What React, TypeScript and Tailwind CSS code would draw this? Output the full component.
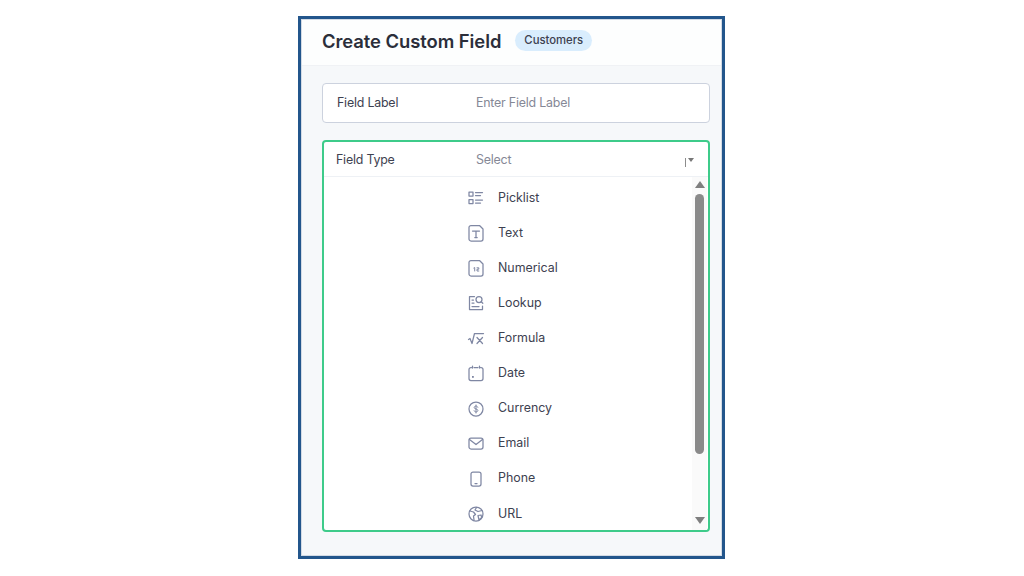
import type { ReactNode } from 'react'

const iconClass = 'h-[18px] w-[18px] text-[#7f87a3]'

function Svg({ children }: { children: ReactNode }) {
  return (
    <svg viewBox="0 0 18 18" fill="none" stroke="currentColor" strokeWidth="1.25" strokeLinecap="round" strokeLinejoin="round" className={iconClass}>
      {children}
    </svg>
  )
}

const fieldTypes: { name: string; icon: ReactNode }[] = [
  {
    name: 'Picklist',
    icon: (
      <Svg>
        <rect x="2" y="3" width="4" height="4" />
        <rect x="2" y="10.500" width="4" height="4" />
        <path d="M8.500 3.500h7M8.500 6.500h5M8.500 11h7M8.500 14h5" />
      </Svg>
    ),
  },
  {
    name: 'Text',
    icon: (
      <Svg>
        <path d="M4 1.500h8.500l3.500 3.500v10a2 2 0 0 1-2 2H4a2 2 0 0 1-2-2V3.500a2 2 0 0 1 2-2z" />
        <path d="M5.500 7h7M9 7v6.500M7.800 13.500h2.400" />
      </Svg>
    ),
  },
  {
    name: 'Numerical',
    icon: (
      <Svg>
        <path d="M4 1.500h8.500l3.500 3.500v10a2 2 0 0 1-2 2H4a2 2 0 0 1-2-2V3.500a2 2 0 0 1 2-2z" />
        <path d="M6.800 9l.9-.5v3.500M10 8.800h1.800v1.400H10v1.800h1.800" strokeWidth="1" />
      </Svg>
    ),
  },
  {
    name: 'Lookup',
    icon: (
      <Svg>
        <path d="M7.500 2.500H2.500v13h13V12" />
        <path d="M5 6h1.500M5 9h2M5 12.500h7" />
        <circle cx="12" cy="5.500" r="3" />
        <path d="M14.200 7.700l1.600 1.600" />
      </Svg>
    ),
  },
  {
    name: 'Formula',
    icon: (
      <Svg>
        <path d="M1.500 10.500l1.500-1 2 5L7.500 4.500h9" />
        <path d="M10 8.500l5.500 6M15.500 8.500l-5.500 6" />
      </Svg>
    ),
  },
  {
    name: 'Date',
    icon: (
      <Svg>
        <path d="M4.500 3.500H4a2 2 0 0 0-2 2v9a2 2 0 0 0 2 2h10a2 2 0 0 0 2-2v-9a2 2 0 0 0-2-2h-.5M7 3.500h4" />
        <path d="M5.500 2v2M12.500 2v2" />
        <rect x="5" y="12" width="1.800" height="1.800" fill="currentColor" stroke="none" />
      </Svg>
    ),
  },
  {
    name: 'Currency',
    icon: (
      <Svg>
        <circle cx="9" cy="9" r="7" />
        <path d="M10.800 7.200c-.3-.8-1-1.100-1.800-1.100-1 0-1.800.5-1.800 1.400 0 2 3.700 1 3.700 3 0 .9-.9 1.400-1.900 1.400-.9 0-1.600-.4-1.900-1.100M9 5v8" strokeWidth="1" />
      </Svg>
    ),
  },
  {
    name: 'Email',
    icon: (
      <Svg>
        <rect x="2" y="3" width="14" height="11" rx="2" />
        <path d="M2.500 4.500l6.500 5 6.500-5" />
      </Svg>
    ),
  },
  {
    name: 'Phone',
    icon: (
      <Svg>
        <rect x="4" y="2" width="10" height="14" rx="2" />
        <path d="M8 13.500h2" />
      </Svg>
    ),
  },
  {
    name: 'URL',
    icon: (
      <Svg>
        <circle cx="9" cy="9" r="7" />
        <path d="M3 6l3.500 1 2 2.500-2 1.500.5 4M9.500 2.500L8 5l3 1.500 4-1M11 10.500l3-.5.800 2.500-2.800 2.500z" />
      </Svg>
    ),
  },
]

export default function App() {
  return (
    <div className="h-[576px] w-[1024px] overflow-hidden bg-white pl-[298px] pt-4 font-['Inter',sans-serif] text-[#3d4150]">
      <div className="h-[543px] w-[427px] border-[3px] border-[#23568c]">
        <div className="flex h-full flex-col border border-[#d3dbe5] bg-[#f6f8fa]">
          <div className="flex h-[46px] items-center gap-[14px] border-b border-[#f0f2f5] bg-[#fdfefe] pl-[20px]">
            <h1 className="mb-[2px] text-[18.400px] font-semibold tracking-[-0.05px] text-[#2b2e3a]">Create Custom Field</h1>
            <span className="mb-[4px] rounded-full bg-[#d9edfd] px-[9px] py-[1px] text-[11.300px] font-medium leading-[19px] text-[#3d4150]">
              Customers
            </span>
          </div>

          <div className="flex flex-1 flex-col gap-[17px] pl-[20px] pr-[11px] pt-[17px]">
            <div className="flex h-10 items-center rounded-[4px] border border-[#ccd2de] bg-white pl-[14px] text-[12.400px] tracking-[-0.2px]">
              <span className="w-[139px]">Field Label</span>
              <span className="text-[#858896]">Enter Field Label</span>
            </div>

            <div className="flex h-[392px] flex-col rounded-[4px] border-2 border-[#3ecb8a] bg-white">
              <div className="flex h-[35px] items-center justify-between border-b border-[#eef1f5] pl-[12px] pr-[14px] text-[12.400px] tracking-[-0.2px]">
                <div className="mt-[2px] flex items-center">
                  <span className="w-[140px]">Field Type</span>
                  <span className="text-[#858896]">Select</span>
                </div>
                <div className="mt-[6px] flex items-start gap-[2px]">
                  <div className="h-[9px] w-px bg-[#8c8c8c]" />
                  <div className="h-0 w-0 border-x-[3px] border-t-[4px] border-x-transparent border-t-[#777]" />
                </div>
              </div>

              <div className="flex min-h-0 flex-1">
                <div className="flex flex-1 flex-col gap-[17.100px] pl-[143px] pt-[12px]">
                  {fieldTypes.map((f) => (
                    <div key={f.name} className="flex h-[18px] items-center gap-[13px] text-[12.400px]">
                      {f.icon}
                      <span>{f.name}</span>
                    </div>
                  ))}
                </div>
                <div className="flex w-[15px] flex-col items-center bg-[#fafafa] pt-[4px]">
                  <div className="h-0 w-0 border-x-[5px] border-b-[7px] border-x-transparent border-b-[#7f7f7f]" />
                  <div className="mt-[6px] h-[260px] w-[9px] rounded-full bg-[#8a8a8a]" />
                  <div className="mt-[63px] h-0 w-0 border-x-[5px] border-t-[7px] border-x-transparent border-t-[#7f7f7f]" />
                </div>
                <div className="w-px" />
              </div>
            </div>
          </div>
        </div>
      </div>
    </div>
  )
}
